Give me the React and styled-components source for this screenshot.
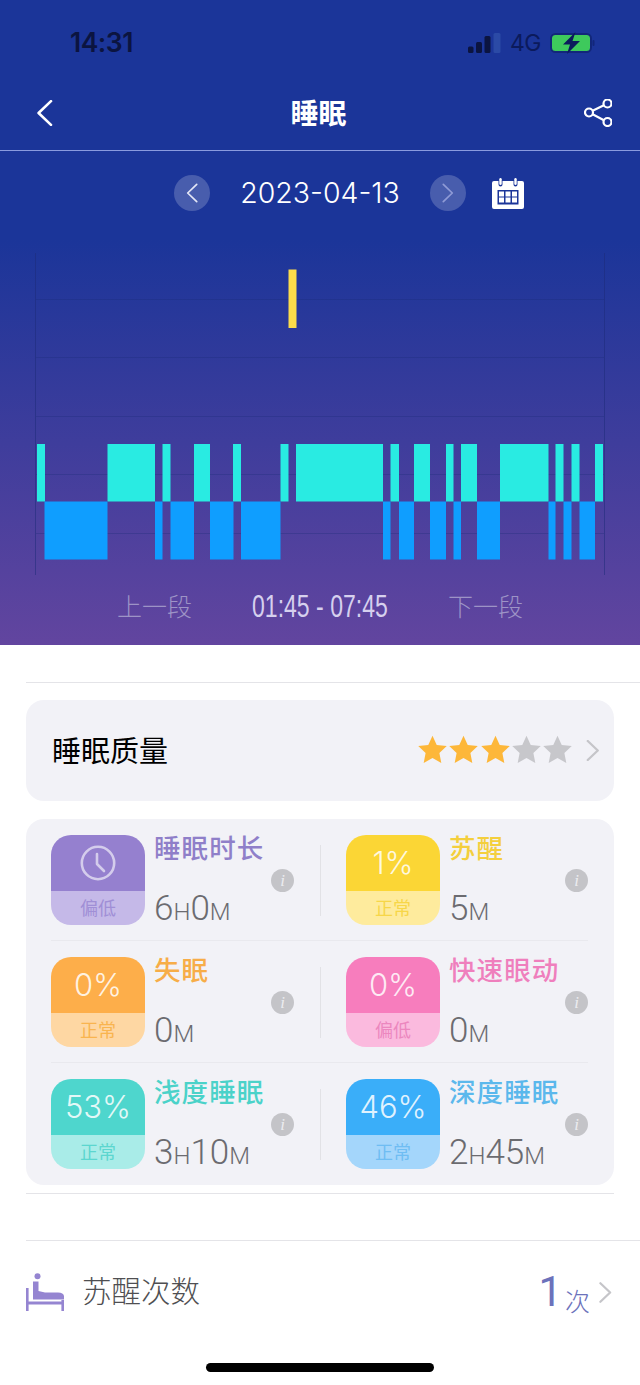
import React from 'react';
import styled, { createGlobalStyle } from 'styled-components';

const CJK = '"Noto Sans CJK SC", sans-serif';
const LATIN = 'Inter, "Noto Sans CJK SC", sans-serif';

const awake = [[288.5, 8]];
const light = [[37, 8], [107.5, 47.5], [162.5, 8], [194, 16], [233, 8], [280.5, 8], [296, 87], [390.5, 8.5], [414, 16], [446, 7.5], [461, 16], [500, 48.5], [555.5, 8], [571.5, 8], [595, 8]];
const deep = [[44.5, 63], [155, 7.5], [170.5, 23.5], [210, 23.5], [241, 39.5], [383, 7.5], [399, 15], [430, 16], [453.5, 7.5], [477, 23], [548.5, 7], [563.5, 8], [579.5, 15.5]];
const gridLines = [299, 357, 416, 474, 533];

const metricRows = [
  [
    { title: '睡眠时长', note: '偏低', clock: true, value: [['6', 'H'], ['0', 'M']], top: '#9580cf', bottom: '#c5b9e8', label: '#a08fd6', titleColor: '#8f7fc9' },
    { title: '苏醒', note: '正常', percent: '1%', value: [['5', 'M']], top: '#fbd635', bottom: '#feeb9d', label: '#f7d648', titleColor: '#f4cf3d' },
  ],
  [
    { title: '失眠', note: '正常', percent: '0%', value: [['0', 'M']], top: '#fdae4a', bottom: '#fed7a3', label: '#f9b44f', titleColor: '#f7ad48' },
    { title: '快速眼动', note: '偏低', percent: '0%', value: [['0', 'M']], top: '#f77dbd', bottom: '#fbbade', label: '#ec87bf', titleColor: '#ef7fbd' },
  ],
  [
    { title: '浅度睡眠', note: '正常', percent: '53%', value: [['3', 'H'], ['10', 'M']], top: '#4ed6cd', bottom: '#a9ece8', label: '#5cd6cf', titleColor: '#4bd2c9' },
    { title: '深度睡眠', note: '正常', percent: '46%', value: [['2', 'H'], ['45', 'M']], top: '#3aaef9', bottom: '#a4d6fb', label: '#6fbdf3', titleColor: '#5bb8ec' },
  ],
];

const GlobalStyle = createGlobalStyle`
  html, body {
    margin: 0;
    padding: 0;
    background: #fff;
  }
  body {
    width: 640px;
    height: 1385px;
    overflow: hidden;
    font-family: ${CJK};
  }
`;

const Page = styled.div`
  width: 640px;
  height: 1385px;
  display: flex;
  flex-direction: column;
  background: #fff;
`;

const Hero = styled.header`
  height: 645px;
  display: flex;
  flex-direction: column;
  background: linear-gradient(#1b3599 0, #1b3599 240px, #62459f 645px);
`;

const StatusBar = styled.div`
  height: 84px;
  box-sizing: border-box;
  padding: 0 44px 0 70px;
  display: flex;
  justify-content: space-between;
  align-items: flex-start;
`;

const Clock = styled.span`
  margin-top: 26px;
  font: 600 26.5px/32px ${LATIN};
  letter-spacing: -0.5px;
  color: #0b1440;
`;

const StatusIcons = styled.div`
  margin-top: 31px;
  display: flex;
  align-items: center;
  gap: 9px;
  height: 24px;
`;

const Network = styled.span`
  font: 400 23px/24px ${LATIN};
  letter-spacing: -0.5px;
  color: #0b1a5c;
`;

const NavBar = styled.nav`
  height: 67px;
  box-sizing: border-box;
  padding: 0 28px 9px 36px;
  display: flex;
  justify-content: space-between;
  align-items: center;
  border-bottom: 1px solid #8a9bdf;
`;

const NavTitle = styled.h1`
  margin: -2px 0 0;
  font: 700 28px/36px ${CJK};
  color: #fff;
`;

const DateRow = styled.div`
  margin-top: 24px;
  height: 36px;
  padding-left: 174px;
  display: flex;
  align-items: center;
`;

const RoundButton = styled.span`
  width: 36px;
  height: 36px;
  border-radius: 50%;
  display: flex;
  align-items: center;
  justify-content: center;
  background: rgba(255, 255, 255, 0.2);
`;

const DateText = styled.span`
  width: 220px;
  text-align: center;
  font: 300 28.5px/36px Inter, sans-serif;
  color: #fff;
`;

const CalendarIcon = styled.svg`
  margin-left: 26px;
`;

const ChartSvg = styled.svg`
  display: block;
  margin-top: 29px;
  flex: none;
`;

const SegmentRow = styled.div`
  height: 65px;
  padding-bottom: 14px;
  box-sizing: border-box;
  display: flex;
  justify-content: center;
  align-items: center;
  gap: 60px;
`;

const SegmentLink = styled.span`
  margin-top: -2px;
  font: 300 25px/34px ${CJK};
  color: #9d93c6;
`;

const SegmentTime = styled.span`
  width: 136px;
  white-space: nowrap;
  font: 400 32px/34px "Liberation Sans", sans-serif;
  color: #d6d0ee;
  transform: scaleX(0.72);
  transform-origin: left center;
`;

const Rule = styled.div`
  height: 1px;
  margin-left: 26px;
  margin-right: ${(p) => (p.$inset ? '26px' : '0')};
  margin-top: ${(p) => p.$top}px;
  background: #e4e4e8;
`;

const QualityCard = styled.section`
  height: 101px;
  box-sizing: border-box;
  margin: 17px 26px 0;
  padding: 0 14px 0 26px;
  display: flex;
  align-items: center;
  justify-content: space-between;
  border-radius: 18px;
  background: #f2f2f7;
`;

const QualityTitle = styled.span`
  margin-top: -4px;
  font: 400 29px/40px ${CJK};
  color: #000;
`;

const QualityScore = styled.div`
  display: flex;
  align-items: center;
  gap: 14px;
`;

const Stars = styled.div`
  display: flex;
  gap: 2.25px;
  margin-bottom: 4px;
`;

const MetricsCard = styled.section`
  margin: 18px 26px 0;
  padding: 16px 26px 16px 25px;
  border-radius: 18px;
  background: #f2f2f7;
`;

const MetricRow = styled.div`
  display: grid;
  grid-template-columns: 243px 1px 242px;
  column-gap: 25.5px;
  align-items: center;
  padding-bottom: ${(p) => (p.$last ? 0 : 15)}px;
  margin-bottom: ${(p) => (p.$last ? 0 : 16)}px;
  border-bottom: ${(p) => (p.$last ? 'none' : '1px solid #e9e9ee')};
`;

const ColumnDivider = styled.div`
  height: 71px;
  background: #e2e2e6;
`;

const Metric = styled.div`
  display: flex;
  align-items: center;
`;

const Badge = styled.div`
  width: 94px;
  height: 90px;
  flex: none;
  border-radius: 20px;
  overflow: hidden;
  display: flex;
  flex-direction: column;
`;

const BadgeTop = styled.div`
  height: 56px;
  display: flex;
  align-items: center;
  justify-content: center;
  background: ${(p) => p.$color};
  font: 300 31px/40px ${LATIN};
  color: rgba(255, 255, 255, 0.85);
`;

const BadgeNote = styled.div`
  flex: 1;
  padding-bottom: 2px;
  display: flex;
  align-items: center;
  justify-content: center;
  background: ${(p) => p.$color};
  font: 400 18px/24px ${CJK};
  color: ${(p) => p.$text};
`;

const MetricText = styled.div`
  flex: 1;
  height: 90px;
  margin-left: 9px;
  display: flex;
  flex-direction: column;
  justify-content: space-between;
`;

const MetricTitle = styled.div`
  margin-top: -2px;
  font: 500 26.5px/28px ${CJK};
  letter-spacing: 1.1px;
  color: ${(p) => p.$color};
`;

const MetricValue = styled.div`
  margin-bottom: -4px;
  font: 300 35px/34px Roboto, sans-serif;
  color: #6b6b70;
`;

const Unit = styled.span`
  font-size: 24px;
`;

const InfoDot = styled.span`
  width: 23px;
  height: 23px;
  flex: none;
  border-radius: 50%;
  display: flex;
  align-items: center;
  justify-content: center;
  background: #c4c4c8;
  font: italic 400 17px/23px "Liberation Serif", serif;
  color: #ececf0;
`;

const WakeRow = styled.section`
  height: 102px;
  box-sizing: border-box;
  padding: 0 28px 0 26px;
  display: flex;
  align-items: center;
`;

const WakeTitle = styled.span`
  flex: 1;
  margin: -6px 0 0 18px;
  font: 300 29.5px/40px ${CJK};
  color: #4f4f52;
`;

const WakeCount = styled.span`
  margin-top: -1px;
  font: 400 42px/44px Roboto, sans-serif;
  color: #6c72bb;
`;

const WakeUnit = styled.span`
  margin-left: 3px;
  margin-right: 9px;
  align-self: flex-end;
  font: 300 25px/30px ${CJK};
  color: #6c72bb;
  transform: translateY(-28px);
`;

const HomeBar = styled.div`
  width: 228px;
  height: 9px;
  margin: 20px auto 0;
  border-radius: 5px;
  background: #000;
`;

const Chevron = ({ left, width = 14, height = 22, color = '#fff', stroke = 2 }) => (
  <svg width={width} height={height} viewBox="0 0 14 22" fill="none">
    <path
      d={left ? 'M12.5 1 2 11l10.5 10' : 'M1.5 1 12 11 1.5 21'}
      stroke={color}
      strokeWidth={stroke}
      strokeLinecap="round"
      strokeLinejoin="round"
    />
  </svg>
);

const Star = ({ on }) => (
  <svg width="29" height="28" viewBox="0 0 24 23">
    <path
      fill={on ? '#fdb739' : '#c7c7cb'}
      d="M12 0.5l3.5 7.6 8.3 1-6.1 5.7 1.6 8.2L12 18.9 4.7 23l1.6-8.2L0.2 9.1l8.3-1z"
    />
  </svg>
);

const ClockIcon = () => (
  <svg width="36" height="36" viewBox="0 0 36 36" fill="none" stroke="rgba(255,255,255,0.6)" strokeWidth="2.6">
    <circle cx="18" cy="18" r="16.2" />
    <path d="M17 9v10l7 7" strokeLinecap="round" strokeLinejoin="round" />
  </svg>
);

const BedIcon = () => (
  <svg width="38" height="38" viewBox="0 0 38 38" fill="#9585d1">
    <circle cx="11.5" cy="3.2" r="3" />
    <path d="M7 8.5h5.5v9.5l6.5 1.5h13q5.500 0 6 3.5v3.500H7z" />
    <rect x="0" y="15" width="2.6" height="23" />
    <rect x="35.400" y="27" width="2.6" height="11" />
    <rect x="0" y="28.500" width="38" height="3" />
  </svg>
);

export default function App() {
  return (
    <Page>
      <GlobalStyle />
      <Hero>
        <StatusBar>
          <Clock>14:31</Clock>
          <StatusIcons>
            <svg width="33" height="20" viewBox="0 0 33 20">
              <rect x="0" y="13.500" width="5.500" height="6.500" rx="1.500" fill="#0b1440" />
              <rect x="8" y="9" width="6" height="11" rx="1.500" fill="#0b1440" />
              <rect x="16.500" y="3" width="6" height="17" rx="1.500" fill="#0b1440" />
              <rect x="25.500" y="0" width="7" height="20" rx="1.500" fill="#2b4aa6" />
            </svg>
            <Network>4G</Network>
            <svg width="46" height="22" viewBox="0 0 46 22">
              <rect x="1" y="2" width="40" height="18" rx="4.500" fill="#3ec95c" stroke="#12277a" strokeWidth="2" />
              <rect x="42.500" y="8" width="2" height="6" rx="1" fill="#12277a" />
              <path d="M25.500 0 13 12.500h7L17 22l13-13h-7.500z" fill="#0b1a5c" />
            </svg>
          </StatusIcons>
        </StatusBar>
        <NavBar>
          <Chevron left width={17} height={26} stroke={2.2} />
          <NavTitle>睡眠</NavTitle>
          <svg width="28" height="28" viewBox="0 0 28 28" fill="none" stroke="#fff" strokeWidth="2.200">
            <circle cx="23.500" cy="4.500" r="4" />
            <circle cx="23.500" cy="23" r="4" />
            <circle cx="5" cy="13.500" r="4" />
            <path d="M8.600 11.700 19.900 6.300M8.600 15.300 19.900 21.200" />
          </svg>
        </NavBar>
        <DateRow>
          <RoundButton>
            <Chevron left width={12} height={20} color="#e4e7f6" />
          </RoundButton>
          <DateText>2023-04-13</DateText>
          <RoundButton>
            <Chevron width={12} height={20} color="#8f9bd6" />
          </RoundButton>
          <CalendarIcon width="32" height="31" viewBox="0 0 32 31">
            <path fill="#fff" d="M2 3h4.500v3.500a2 2 0 0 0 4 0V3h11v3.500a2 2 0 0 0 4 0V3H30a2 2 0 0 1 2 2v24a2 2 0 0 1-2 2H2a2 2 0 0 1-2-2V5a2 2 0 0 1 2-2z" />
            <rect x="7.300" y="0" width="2.400" height="7" rx="1.200" fill="#fff" />
            <rect x="22.300" y="0" width="2.400" height="7" rx="1.200" fill="#fff" />
            <rect x="5.500" y="12" width="21" height="14.500" fill="#1b3599" />
            {[0, 1, 2].flatMap((c) => [0, 1].map((r) => (
              <rect key={`${c}-${r}`} x={7 + c * 6.500} y={13.500 + r * 6} width="5" height="5" fill="#fff" />
            )))}
          </CalendarIcon>
        </DateRow>
        <ChartSvg width="640" height="340" viewBox="0 240 640 340">
          {gridLines.map((y) => (
            <line key={y} x1="36" x2="604" y1={y + 0.5} y2={y + 0.5} stroke="#1c2a78" strokeOpacity="0.3" />
          ))}
          <line x1="35.500" x2="35.500" y1="253" y2="575" stroke="#1c2a78" strokeOpacity="0.5" />
          <line x1="604.500" x2="604.500" y1="253" y2="575" stroke="#1c2a78" strokeOpacity="0.5" />
          {awake.map(([x, w]) => <rect key={x} x={x} y="269.500" width={w} height="58.500" fill="#fcdc4a" />)}
          {light.map(([x, w]) => <rect key={x} x={x} y="444" width={w} height="57.500" fill="#29ebe2" />)}
          {deep.map(([x, w]) => <rect key={x} x={x} y="501.500" width={w} height="58" fill="#0f9eff" />)}
        </ChartSvg>
        <SegmentRow>
          <SegmentLink>上一段</SegmentLink>
          <SegmentTime>01:45 - 07:45</SegmentTime>
          <SegmentLink>下一段</SegmentLink>
        </SegmentRow>
      </Hero>

      <Rule $top={37} />
      <QualityCard>
        <QualityTitle>睡眠质量</QualityTitle>
        <QualityScore>
          <Stars>
            {[1, 2, 3, 4, 5].map((n) => <Star key={n} on={n <= 3} />)}
          </Stars>
          <Chevron width={14} height={21} color="#c5c5c9" stroke={2.4} />
        </QualityScore>
      </QualityCard>

      <MetricsCard>
        {metricRows.map((row, i) => (
          <MetricRow key={i} $last={i === metricRows.length - 1}>
            {row.flatMap((m, j) => [
              j === 1 && <ColumnDivider key="divider" />,
              <Metric key={m.title}>
                <Badge>
                  <BadgeTop $color={m.top}>{m.clock ? <ClockIcon /> : m.percent}</BadgeTop>
                  <BadgeNote $color={m.bottom} $text={m.label}>{m.note}</BadgeNote>
                </Badge>
                <MetricText>
                  <MetricTitle $color={m.titleColor}>{m.title}</MetricTitle>
                  <MetricValue>
                    {m.value.map(([n, u]) => (
                      <React.Fragment key={u}>{n}<Unit>{u}</Unit></React.Fragment>
                    ))}
                  </MetricValue>
                </MetricText>
                <InfoDot>i</InfoDot>
              </Metric>,
            ])}
          </MetricRow>
        ))}
      </MetricsCard>

      <Rule $top={8} $inset />
      <Rule $top={46} />
      <WakeRow>
        <BedIcon />
        <WakeTitle>苏醒次数</WakeTitle>
        <WakeCount>1</WakeCount>
        <WakeUnit>次</WakeUnit>
        <Chevron width={13} height={21} color="#c5c5c9" stroke={2.4} />
      </WakeRow>
      <HomeBar />
    </Page>
  );
}
